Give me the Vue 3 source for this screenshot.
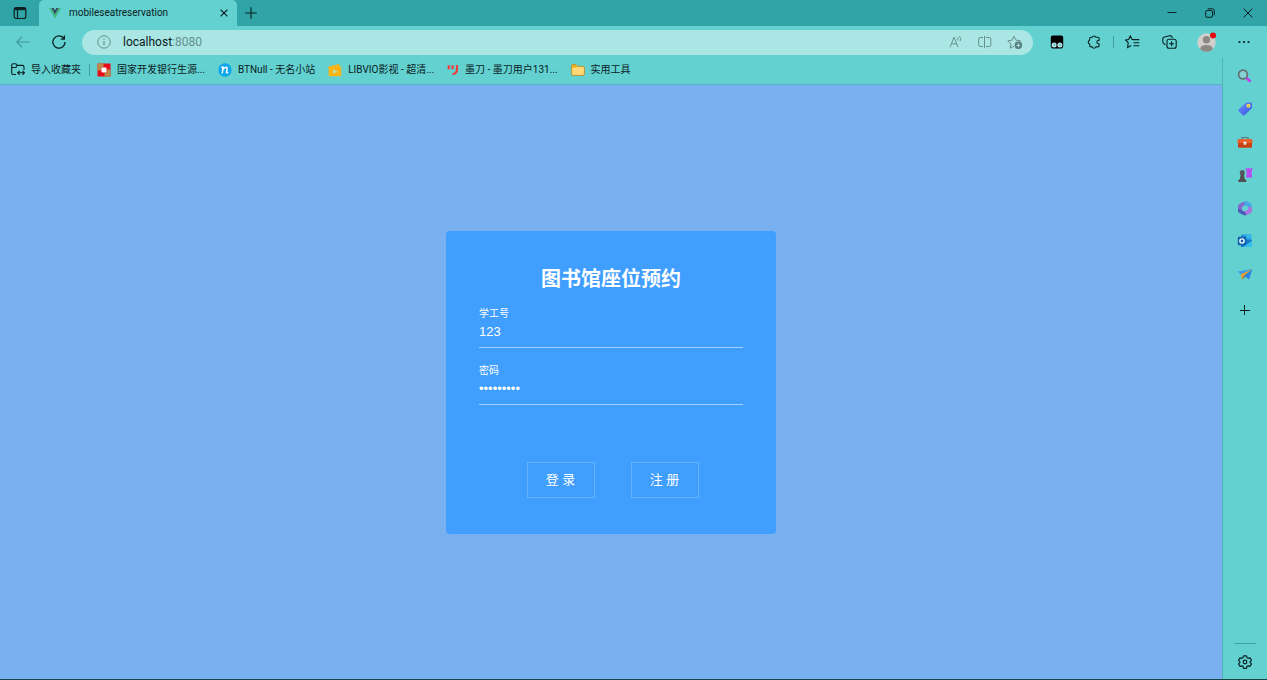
<script setup>
import { ref } from 'vue'

const address = ref('localhost:8080')
const userId = ref('123')
const password = ref('123456789')
</script>

<template>
  <div class="browser">
    <header class="tabs">
      <button class="icon-btn tab-menu" aria-label="Tab actions">
        <svg width="14" height="14" viewBox="0 0 14 14" fill="none" stroke="#0b2022" stroke-width="1.2">
          <rect x="1.2" y="1.7" width="11.6" height="10.8" rx="2" />
          <path d="M4.5 4v8.500" /><path d="M1.500 3h11" stroke-width="2.400" />
        </svg>
      </button>
      <div class="tab">
        <svg width="12" height="11" viewBox="0 0 12 11">
          <path d="M0 0h2.5L6 6.2 9.5 0H12L6 10.7z" fill="#41b883" />
          <path d="M2.500 0h2.200L6 2.200 7.300 0h2.200L6 6.200z" fill="#35495e" />
        </svg>
        <span class="tab-title">mobileseatreservation</span>
        <button class="icon-btn" aria-label="Close tab">
          <svg width="8" height="8" viewBox="0 0 8 8" stroke="#0b2022" stroke-width="1.2"><path d="M.6.6l6.8 6.8M7.4.6L.6 7.4" /></svg>
        </button>
      </div>
      <button class="icon-btn new-tab" aria-label="New tab">
        <svg width="12" height="12" viewBox="0 0 12 12" stroke="#0b2022" stroke-width="1.1"><path d="M6 .3v11.4M.3 6h11.4" /></svg>
      </button>
      <div class="window-buttons">
        <button class="icon-btn" aria-label="Minimize">
          <svg width="10" height="10" viewBox="0 0 10 10" stroke="#0b2022"><path d="M.5 4.500h9" /></svg>
        </button>
        <button class="icon-btn" aria-label="Restore">
          <svg width="10" height="10" viewBox="0 0 10 10" fill="none" stroke="#0b2022"><rect x=".7" y="2.5" width="6.8" height="6.8" rx="1.4" /><path d="M2.7.8h4.6a2 2 0 0 1 2 2v4.5" /></svg>
        </button>
        <button class="icon-btn" aria-label="Close window">
          <svg width="10" height="10" viewBox="0 0 10 10" stroke="#0b2022"><path d="M.7.7l8.6 8.6M9.3.7L.7 9.3" /></svg>
        </button>
      </div>
    </header>

    <nav class="toolbar">
      <button class="icon-btn back" aria-label="Back">
        <svg width="14" height="12" viewBox="0 0 14 12" fill="none" stroke="#3f9495" stroke-width="1.1"><path d="M6 .7L.8 6 6 11.3M.8 6h12.9" /></svg>
      </button>
      <button class="icon-btn reload" aria-label="Reload">
        <svg width="14" height="14" viewBox="0 0 14 14" fill="none" stroke="#0b2022" stroke-width="1.3"><path d="M12.1 3.7A6.1 6.1 0 1 0 13.1 7M12.4.5v3.6H8.8" /></svg>
      </button>
      <div class="address">
        <svg width="14" height="14" viewBox="0 0 14 14" fill="none" stroke="#668f8f"><circle cx="7" cy="7" r="6.2" /><path d="M7 6v4.2M7 3.6v1.2" stroke-width="1.2" /></svg>
        <label class="url">
          <span class="url-text" aria-hidden="true">localhost<i>:8080</i></span>
          <input v-model="address" class="url-input" aria-label="Address" />
        </label>
        <button class="icon-btn" aria-label="Read aloud">
          <svg width="14" height="14" viewBox="0 0 14 14" fill="none" stroke="#688f8f"><path d="M1 12.2L5 2.3l4 9.9M2.5 8.8h5M8.2 2.5q1.200 1 .6 2.8M10.1 1.2q2.600 2 1 5" /></svg>
        </button>
        <button class="icon-btn" aria-label="Split screen">
          <svg width="14" height="14" viewBox="0 0 14 14" fill="none" stroke="#688f8f"><path d="M5 2.500H2.200Q.7 2.500.7 4v6q0 1.500 1.500 1.500H5M8 2.500h3.300q1.500 0 1.500 1.500v6q0 1.500-1.500 1.500H8M6.500.8v12.400" /></svg>
        </button>
        <button class="icon-btn" aria-label="Add to favorites">
          <svg width="16" height="16" viewBox="0 0 16 16" fill="none" stroke="#688f8f"><path d="M7 12.2l-3.9 2 .8-4.3L.8 6.8l4.2-.6L7 2.3l2 3.9 4.4.6-1.3 1.3" /><circle cx="11.4" cy="11.3" r="3.7" fill="#587b7b" stroke="none" /><path d="M11.4 9.3v4M9.4 11.3h4" stroke="#abe5e3" /></svg>
        </button>
      </div>
      <div class="tools">
        <button class="icon-btn" aria-label="Script manager">
          <svg width="14" height="14" viewBox="0 0 14 14"><path d="M2.800.5h8.400q2 0 2 2v8.200q0 2.800-2.800 2.800H3.600Q.8 13.500.8 10.700V2.500q0-2 2-2z" fill="#000" /><circle cx="4.100" cy="10" r="2.500" fill="#b9e6e6" /><circle cx="9.900" cy="10" r="2.500" fill="#b9e6e6" /><circle cx="4.400" cy="9.800" r="1" fill="#4fb9ba" /><circle cx="10.200" cy="9.800" r="1" fill="#4fb9ba" /></svg>
        </button>
        <button class="icon-btn" aria-label="Extensions">
          <svg width="14" height="14" viewBox="0 0 14 14" fill="none" stroke="#0b2022" stroke-width="1.1" stroke-linejoin="round"><path d="M5.200 2.300a1.900 1.900 0 0 1 3.600 0h2q1.300 0 1.300 1.300v1.900h-.7a1.600 1.600 0 0 0 0 3.200h.7v1.900q0 1.300-1.300 1.300h-2a1.900 1.900 0 0 1-3.600 0H4q-1.300 0-1.300-1.300V9a1.900 1.900 0 0 1 0-3.700V3.600Q2.700 2.300 4 2.300z" /></svg>
        </button>
        <span class="divider"></span>
        <button class="icon-btn" aria-label="Favorites">
          <svg width="15" height="14" viewBox="0 0 15 14" fill="none" stroke="#0b2022" stroke-width="1.1"><path d="M8.500 4.600L7.100 4.500 5.300.9 3.600 4.500.6 5l2.600 2.700-.6 4.700 3.600-1.900M8.500 4.600h5.800M8.500 7.700h5.800M8.500 10.700h5.800" /></svg>
        </button>
        <button class="icon-btn" aria-label="Collections">
          <svg width="15" height="14" viewBox="0 0 15 14" fill="none" stroke="#0b2022" stroke-width="1.1"><rect x="5" y="4.300" width="9.200" height="9" rx="2" /><path d="M9.600 6.300v5M7.100 8.800h5M3.500 9.800L2.200 9Q1.200 8.500.9 7.200L.7 4.500Q.6 2.500 2.500 2l5-1.300Q9.300.4 10.200 2.200l.3.700" /></svg>
        </button>
        <button class="icon-btn" aria-label="Profile">
          <svg width="20" height="20" viewBox="0 0 20 20"><circle cx="9.500" cy="10.500" r="9.200" fill="#d0cfcd" /><circle cx="9.500" cy="7.800" r="3.700" fill="#8b8885" /><path d="M3.200 17.200Q3.500 13 9.500 13t6.300 4.200q-2.700 2.500-6.300 2.500t-6.300-2.500z" fill="#8b8885" /><circle cx="16" cy="3.500" r="3" fill="#e5090f" /></svg>
        </button>
        <button class="icon-btn" aria-label="Settings and more">
          <svg width="12" height="4" viewBox="0 0 12 4" fill="#0b2022"><circle cx="1.500" cy="2" r="1.100" /><circle cx="6" cy="2" r="1.100" /><circle cx="10.500" cy="2" r="1.100" /></svg>
        </button>
      </div>
    </nav>

    <div class="body">
      <div class="main">
        <nav class="bookmarks">
          <a href="#">
            <svg width="14" height="13" viewBox="0 0 14 13" fill="none" stroke="#0b2022" stroke-width="1.100"><path d="M5 11.500H2.200Q.7 11.500.7 10V2.200Q.7.8 2.200.8h2.600l1.500 1.600h5.200q1.500 0 1.500 1.500v3M.8 4.500h4l1.500-2M7 9.800h6M8.700 7.800L6.700 9.800l2 2M11.500 7.800l2 2-2 2" /></svg>
            <span>导入收藏夹</span>
          </a>
          <span class="divider"></span>
          <a href="#">
            <svg width="14" height="14" viewBox="0 0 14 14"><path d="M.5.5h13v13H.5z" fill="#e80b18" /><path d="M.5.500h6v4h-2v3h-4zM13.500 13.500h-6v-4h2v-3h4z" fill="#bd8745" /><rect x="4.500" y="4.500" width="5" height="5" rx="1" fill="#fff" /></svg>
            <span>国家开发银行生源...</span>
          </a>
          <a href="#">
            <svg width="14" height="14" viewBox="0 0 14 14"><circle cx="7" cy="7" r="6.700" fill="#0aa5ea" /><path d="M3.200 4.600Q4.800 3.600 5.200 4.200L4.200 10.500M4.900 6.600Q7 4 8.400 4.200q1 .3.700 1.600l-.6 3.200q-.1 1.300 1.800.4" fill="none" stroke="#fff" stroke-width="1.500" /></svg>
            <span>BTNull - 无名小站</span>
          </a>
          <a href="#">
            <svg width="14" height="14" viewBox="0 0 14 14"><path d="M.5 3.500L11.500 1v2.500h1.700v9.700H.7z" fill="#fbb615" /><path d="M5 6l4.500 2.400L5 10.700z" fill="#c6dfa0" /></svg>
            <span>LIBVIO影视 - 超清...</span>
          </a>
          <a href="#">
            <svg width="12" height="12" viewBox="0 0 12 12" fill="none" stroke="#f23d3d" stroke-width="2.200"><path d="M1.800 1.300v4M5.500 1.300v4M10 1v4.500q0 3.800-4.500 4.800" /></svg>
            <span>墨刀 - 墨刀用户131...</span>
          </a>
          <a href="#">
            <svg width="14" height="12" viewBox="0 0 14 12"><path d="M.6 10V1.800Q.6.6 1.800.6H5l1.500 1.700h5.700q1.200 0 1.200 1.200V10q0 1.400-1.400 1.400H2Q.6 11.400.6 10z" fill="#ffd978" stroke="#b68b28" stroke-width=".9" /><path d="M1 1h4l1.200 1.300L5 3.500H1z" fill="#f3ac18" /></svg>
            <span>实用工具</span>
          </a>
        </nav>

        <main class="page">
          <form class="card" @submit.prevent>
            <h1>图书馆座位预约</h1>
            <div class="field">
              <label for="user-id">学工号</label>
              <input id="user-id" v-model="userId" type="text" />
            </div>
            <div class="field">
              <label for="password">密码</label>
              <input id="password" v-model="password" type="password" />
            </div>
            <div class="actions">
              <button type="submit">登 录</button>
              <button type="button">注 册</button>
            </div>
          </form>
        </main>
      </div>

      <aside class="sidebar">
        <button class="icon-btn" aria-label="Search">
          <svg width="16" height="16" viewBox="0 0 16 16" fill="none"><circle cx="6" cy="6.500" r="4.400" fill="#83d3d5" stroke="#666e72" stroke-width="1.700" /><path d="M9.500 10l4 3.700" stroke="#c436ee" stroke-width="2.500" /></svg>
        </button>
        <button class="icon-btn" aria-label="Shopping">
          <svg width="16" height="16" viewBox="0 0 16 16"><defs><linearGradient id="tag" x1="0" y1="0" x2="1" y2="1"><stop stop-color="#6a91ff" /><stop offset="1" stop-color="#3652df" /></linearGradient></defs><path d="M9.500 1.500h4.700q.8 0 .8.800v4.700L7.500 14.200q-.8.800-1.600 0L1.600 10.200q-.8-.8 0-1.600z" fill="url(#tag)" /><circle cx="11.500" cy="4.800" r="2" fill="#ffdc49" /><circle cx="11.500" cy="4.800" r=".7" fill="#a8a56f" /></svg>
        </button>
        <button class="icon-btn" aria-label="Tools">
          <svg width="16" height="16" viewBox="0 0 16 16"><path d="M5 6V3.500h6V6" fill="none" stroke="#58787b" stroke-width="1.200" /><rect x="1" y="5.500" width="14" height="8.300" rx="1.200" fill="#c94312" /><path d="M.5 6.500q0-1.200 1.200-1.200h12.600q1.200 0 1.200 1.200v2.500H.5z" fill="#ed602b" /><rect x="6.500" y="7.500" width="3" height="3.300" rx=".7" fill="#e4dfdb" /></svg>
        </button>
        <button class="icon-btn" aria-label="Games">
          <svg width="16" height="16" viewBox="0 0 16 16"><path d="M8.500 1.200l1.700-.2.200 1.300h.8V1h1.900v1.300h.8L14.200 1l1.500.2-1.200 4.300.8 5H9l.8-5z" fill="#b94df2" /><circle cx="5.300" cy="5.500" r="2.500" fill="#555b5c" /><path d="M3.700 7h3.200l.8 5 1.600 1.300v1.700h-8v-1.700L2.900 12z" fill="#4e5150" /></svg>
        </button>
        <button class="icon-btn" aria-label="Microsoft 365">
          <svg width="16" height="16" viewBox="0 0 16 16"><path d="M8.500 1L3 3.500Q1 4.500 1 6.500v4l4 1V7l4.500-3z" fill="#8167cf" /><path d="M7 1.300q2.500-.8 4.500.7l2.500 2q1 1 1 2.500V11l-4-3V6.500L7.500 4.800z" fill="#49a5e3" /><path d="M15 7.500V11q-.2 1.500-1.500 2.200L9.500 15 5 12.500 11 9.500V7z" fill="#ad75df" /><path d="M1 8.500l4 2 3 1.500 1.500 3q-1.500.7-3 0L2.500 13Q1 12 1 10.500z" fill="#4c58b8" /></svg>
        </button>
        <button class="icon-btn" aria-label="Outlook">
          <svg width="16" height="16" viewBox="0 0 16 16"><path d="M4 1.500h10.300v6H4z" fill="#2796df" /><path d="M9 1.500h5.300v4H9z" fill="#36b7ed" /><path d="M4 7h11v7H4z" fill="#1678c8" /><path d="M6 14l9-6.500V14z" fill="#35bfed" /><rect x=".8" y="3.800" width="8.500" height="8.500" rx="1" fill="#0b61ae" /><circle cx="5" cy="8" r="2.100" fill="none" stroke="#fff" stroke-width="1.400" /></svg>
        </button>
        <button class="icon-btn" aria-label="Drop">
          <svg width="16" height="16" viewBox="0 0 16 16"><path d="M15.300 3.200L.8 5.500l3.400 3.200z" fill="#3e98e8" /><path d="M15.300 3.200L3.800 8.200l1.100 5.300 2.400-3z" fill="#e3a02c" /><path d="M15.300 3.200L7 9.800l5 3.600z" fill="#2a82e4" /><path d="M7 9.800l-2.100 3.700 3.500-2.700z" fill="#6f6a63" /></svg>
        </button>
        <button class="icon-btn add" aria-label="Customize">
          <svg width="10" height="10" viewBox="0 0 10 10" stroke="#0b2022"><path d="M4.500 0v10M0 5.500h10" /></svg>
        </button>
        <div class="side-footer">
          <button class="icon-btn" aria-label="Settings">
            <svg width="14" height="14" viewBox="0 0 14 14" fill="none" stroke="#0b2022" stroke-width="1.200" stroke-linejoin="round"><path d="M5.500.8h3l.5 1.900 1.100.6 1.900-.5 1.500 2.500L12.100 6.700v.7l1.400 1.400-1.500 2.500-1.900-.5-1.100.6-.5 1.900h-3L5 11.400l-1.100-.6-1.900.5L.5 8.800l1.400-1.400v-.7L.5 5.300 2 2.800l1.900.5L5 2.700z" /><circle cx="7" cy="7" r="1.800" /></svg>
          </button>
        </div>
      </aside>
    </div>
  </div>
</template>

<style>
body {
  margin: 0;
}
</style>

<style scoped>
* {
  box-sizing: border-box;
}
.browser {
  display: flex;
  flex-direction: column;
  min-height: 100vh;
  background: #62d1d0;
  border-bottom: 1px solid #17464a;
  color: #0b2022;
  font: 10px/14px Roboto, "Noto Sans CJK SC", sans-serif;
}
svg {
  display: block;
  flex: none;
}
.icon-btn {
  display: flex;
  align-items: center;
  justify-content: center;
  padding: 0;
  border: 0;
  background: none;
}
.tabs {
  display: flex;
  height: 26px;
  background: #30a4a6;
}
.tab-menu {
  width: 39px;
}
.tab {
  display: flex;
  align-items: center;
  width: 198px;
  padding: 0 9px 0 10px;
  border-radius: 5px 5px 0 0;
  background: #62d1d0;
}
.tab-title {
  flex: 1;
  margin-left: 8px;
}
.new-tab {
  width: 28px;
}
.window-buttons {
  display: flex;
  margin-left: auto;
}
.window-buttons button {
  width: 38px;
}
.toolbar {
  display: flex;
  align-items: center;
  height: 32px;
}
.back {
  width: 45px;
}
.reload {
  width: 28px;
}
.address {
  display: flex;
  flex: 1;
  align-items: center;
  gap: 15px;
  height: 25px;
  margin-left: 9px;
  padding: 0 10px 0 15px;
  border-radius: 13px;
  background: #a9e6e4;
}
.url {
  display: grid;
  flex: 1;
  align-items: center;
  margin-left: -3px;
  font-size: 12px;
  line-height: 18px;
}
.url-text,
.url-input {
  grid-area: 1 / 1;
}
.url-text i {
  color: #668f8f;
  font-style: normal;
}
.url-input {
  width: 100%;
  padding: 0;
  border: 0;
  outline: 0;
  background: none;
  color: transparent;
  font: inherit;
}
.tools {
  display: flex;
  align-items: center;
  padding: 0 5px;
}
.tools button {
  width: 37px;
}
.divider {
  width: 1px;
  height: 12px;
  background: #3f9ea0;
}
.tools .divider {
  margin-left: 1px;
}
.body {
  display: flex;
  flex: 1;
}
.main {
  display: flex;
  flex: 1;
  flex-direction: column;
}
.bookmarks {
  display: flex;
  align-items: center;
  gap: 13px;
  height: 27px;
  padding: 0 11px 3px;
  border-bottom: 1px solid #55b5bd;
}
.bookmarks a {
  display: flex;
  align-items: center;
  gap: 6px;
  color: inherit;
  text-decoration: none;
  white-space: nowrap;
}
.bookmarks .divider {
  margin: 0 -6px 0 -5px;
}
.page {
  display: flex;
  flex: 1;
  align-items: center;
  justify-content: center;
  padding-top: 1px;
  background: #79b1f0;
}
.card {
  width: 330px;
  padding: 33px 33px 36px;
  border-radius: 4px;
  background: #409eff;
  color: #fff;
  font-family: "Liberation Sans", "Noto Sans CJK SC", sans-serif;
}
h1 {
  margin: 0 0 13px;
  font-size: 20px;
  line-height: 30px;
  text-align: center;
}
.field {
  margin-bottom: 15px;
}
.field label {
  display: block;
  line-height: 14px;
}
.field input {
  display: block;
  width: 100%;
  height: 27px;
  padding: 0 0 6px;
  border: 0;
  border-bottom: 1px solid #9fceff;
  border-radius: 0;
  outline: 0;
  background: none;
  color: #fff;
  font: 13px/20px "Liberation Sans", sans-serif;
}
.field + .field {
  padding-top: 1px;
}
.actions {
  display: flex;
  justify-content: center;
  gap: 36px;
  margin-top: 57px;
  padding-left: 3px;
}
.actions button {
  width: 68px;
  height: 36px;
  padding: 0;
  border: 1px solid #66b1ff;
  background: none;
  color: #fff;
  font: 13px/20px "Liberation Sans", "Noto Sans CJK SC", sans-serif;
}
.sidebar {
  display: flex;
  flex-direction: column;
  align-items: center;
  gap: 17px;
  width: 45px;
  padding-top: 10px;
  border-left: 1px solid #50b3b6;
}
.add {
  margin-top: 6px;
}
.side-footer {
  margin-top: auto;
  padding: 11px 4px 10px;
  border-top: 1px solid #42a3a5;
}
</style>
